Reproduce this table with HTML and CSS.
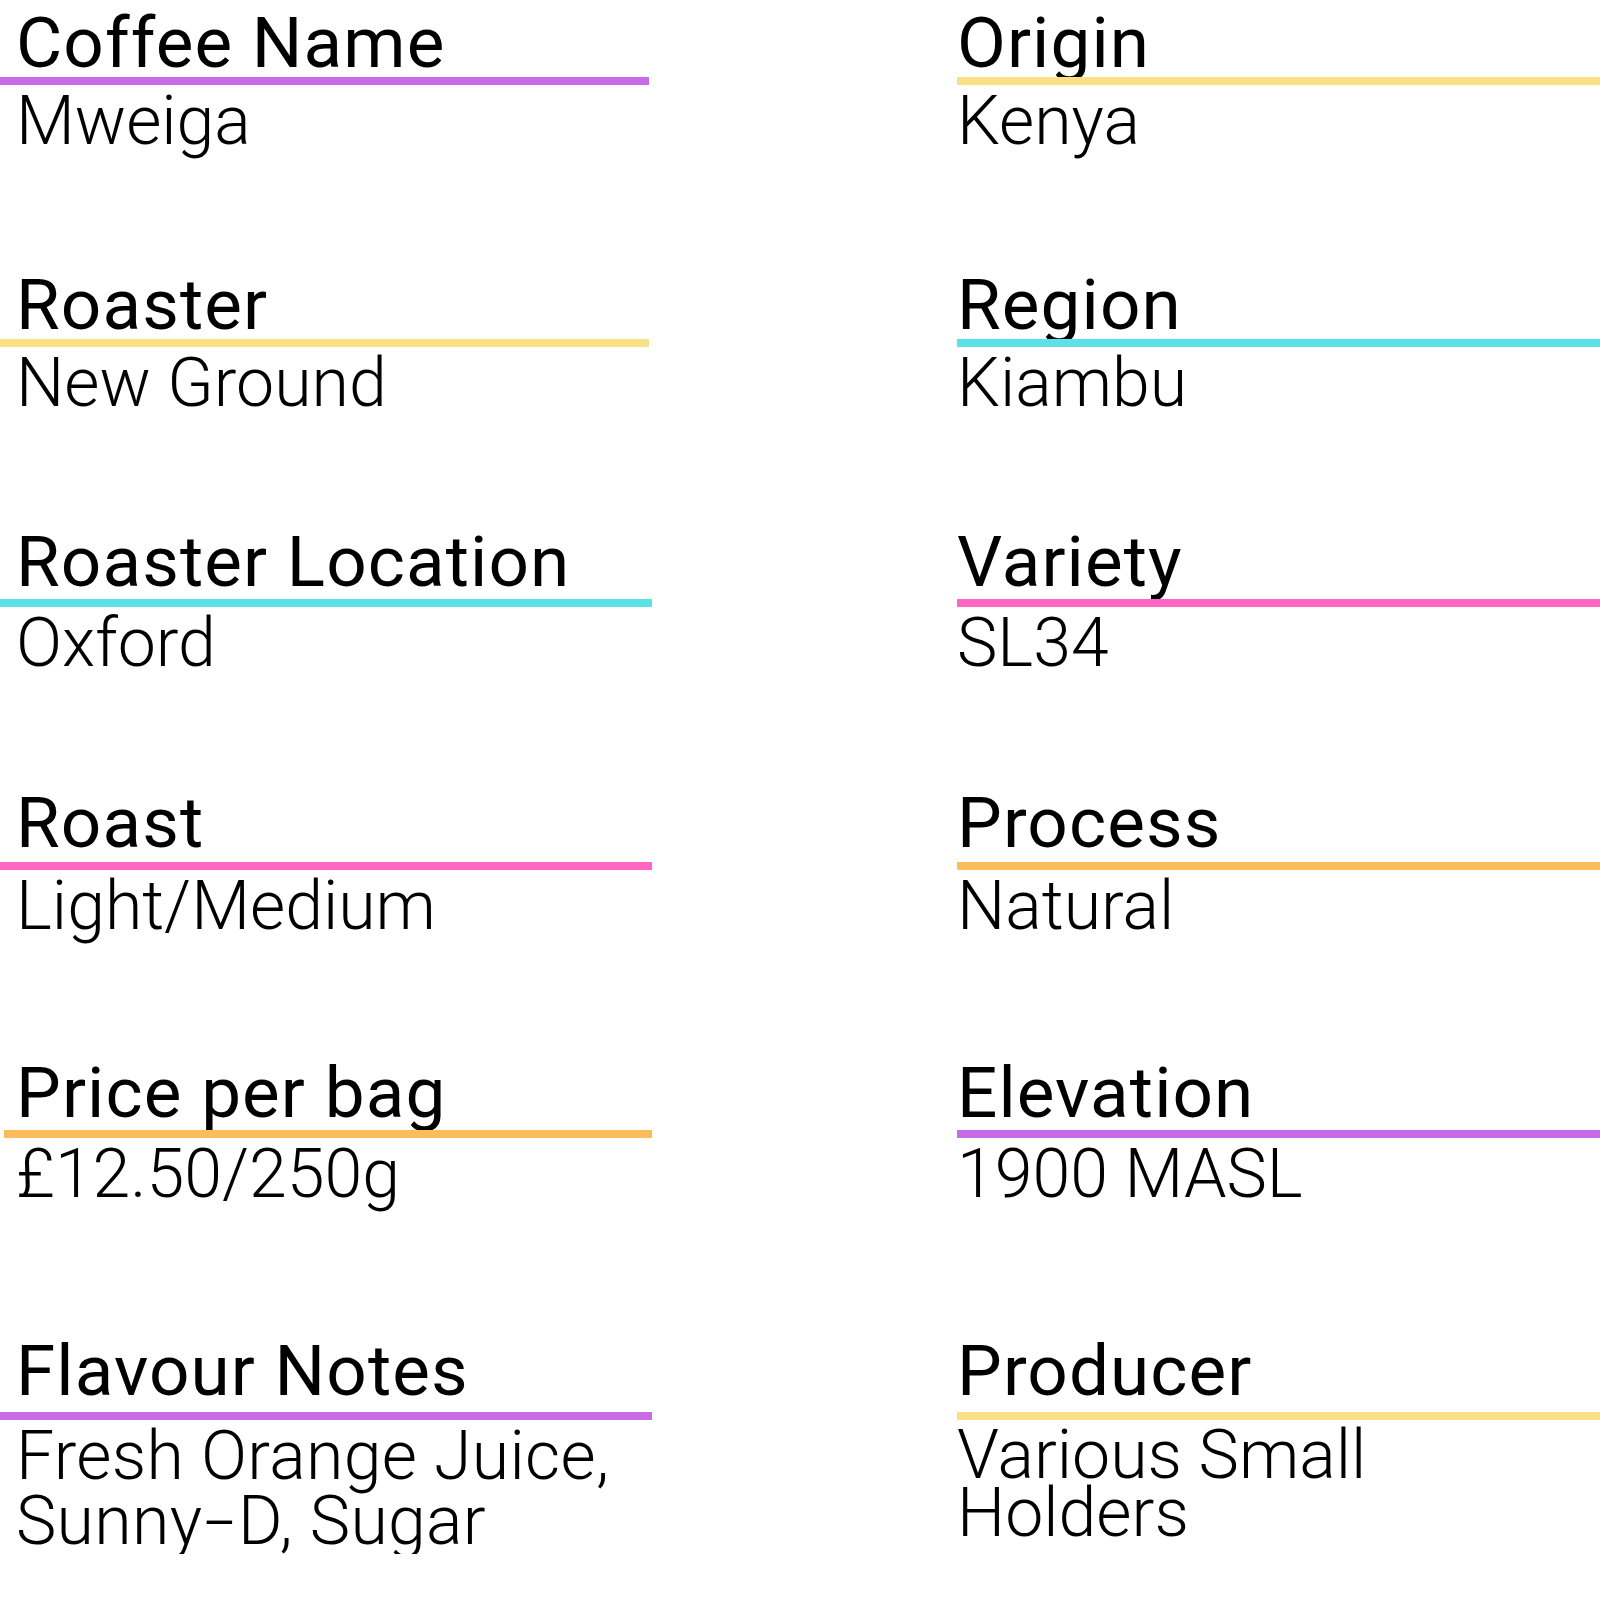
FILE: index.html
```html
<!DOCTYPE html>
<html lang="en">
<head>
<meta charset="utf-8">
<title>Coffee</title>
<link rel="stylesheet" href="styles.css">
</head>
<body>
<main class="sheet">
  <section class="field">
    <h2 class="label">Coffee Name</h2>
    <div class="rule rule-purple rule-short"></div>
    <p class="value">Mweiga</p>
  </section>
  <section class="field field-right">
    <h2 class="label">Origin</h2>
    <div class="rule rule-yellow"></div>
    <p class="value">Kenya</p>
  </section>

  <section class="field">
    <h2 class="label">Roaster</h2>
    <div class="rule rule-yellow rule-short"></div>
    <p class="value">New Ground</p>
  </section>
  <section class="field field-right">
    <h2 class="label">Region</h2>
    <div class="rule rule-cyan"></div>
    <p class="value">Kiambu</p>
  </section>

  <section class="field field-mid">
    <h2 class="label">Roaster Location</h2>
    <div class="rule rule-cyan"></div>
    <p class="value">Oxford</p>
  </section>
  <section class="field field-right field-mid">
    <h2 class="label">Variety</h2>
    <div class="rule rule-pink"></div>
    <p class="value">SL34</p>
  </section>

  <section class="field field-high">
    <h2 class="label">Roast</h2>
    <div class="rule rule-pink"></div>
    <p class="value">Light/Medium</p>
  </section>
  <section class="field field-right field-high">
    <h2 class="label">Process</h2>
    <div class="rule rule-orange"></div>
    <p class="value">Natural</p>
  </section>

  <section class="field field-mid">
    <h2 class="label">Price per bag</h2>
    <div class="rule rule-orange rule-inset"></div>
    <p class="value">£12.50/250g</p>
  </section>
  <section class="field field-right field-mid">
    <h2 class="label">Elevation</h2>
    <div class="rule rule-purple"></div>
    <p class="value">1900 MASL</p>
  </section>

  <section class="field field-top">
    <h2 class="label">Flavour Notes</h2>
    <div class="rule rule-purple"></div>
    <p class="value value-multi">Fresh Orange Juice,<br>Sunny<span class="dash">-</span>D, Sugar</p>
  </section>
  <section class="field field-right field-top">
    <h2 class="label">Producer</h2>
    <div class="rule rule-yellow"></div>
    <p class="value value-tight">Various Small<br>Holders</p>
  </section>
</main>
</body>
</html>
```

FILE: styles.css
```css
html, body {
  margin: 0;
  padding: 0;
  background: #ffffff;
}

body {
  font-family: Roboto, "Liberation Sans", sans-serif;
  color: #000000;
}

.sheet {
  display: grid;
  grid-template-columns: 652px 643px;
  grid-template-rows: 262px 260px 263px 268px 282px auto;
  column-gap: 305px;
  width: 1600px;
}

.field {
  display: flex;
  flex-direction: column;
}

.label {
  box-sizing: border-box;
  margin: 0;
  padding: 8px 0 0 16px;
  height: 77px;
  font-size: 71px;
  line-height: 69px;
  font-weight: 400;
  letter-spacing: 1.1px;
  white-space: nowrap;
}

.field-mid .label { padding-top: 5px; }
.field-high .label { padding-top: 3px; }
.field-top .label { padding-top: 1px; }

.field-right .label {
  padding-left: 0;
}

.rule {
  height: 8px;
  width: 100%;
}

.rule-short { width: 649px; }
.rule-inset { margin-left: 4px; width: 648px; }

.rule-purple { background: #c86be6; }
.rule-yellow { background: #f9e285; }
.rule-cyan { background: #5ce1e6; }
.rule-pink { background: #ff66c4; }
.rule-orange { background: #fdbd5a; }

.value {
  margin: 0;
  padding: 4px 0 0 16px;
  font-size: 68px;
  line-height: 65px;
  font-weight: 300;
  letter-spacing: 0;
  white-space: nowrap;
}

.field-right .value {
  padding-left: 0;
}

.value-multi {
  letter-spacing: 0.3px;
}

.dash {
  display: inline-block;
  transform: scaleX(1.6);
  margin: 0 8px;
}

.value-tight {
  line-height: 58px;
  padding-top: 6px;
}
```
